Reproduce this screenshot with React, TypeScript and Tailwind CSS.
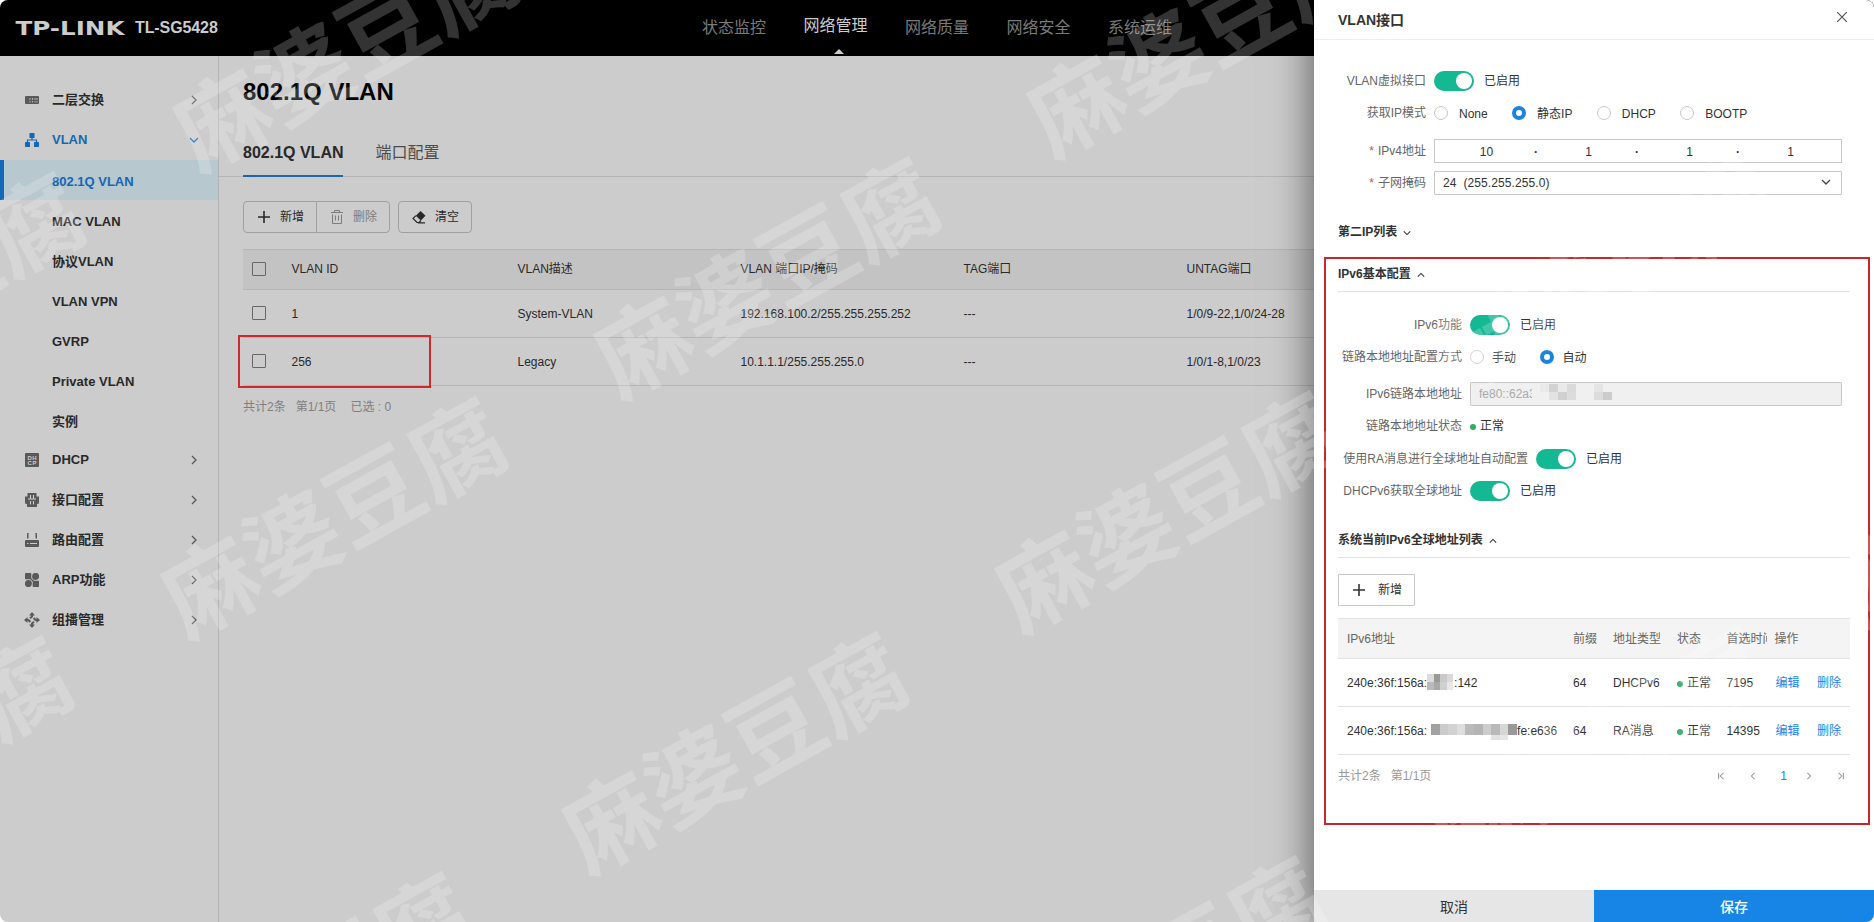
import type { ReactNode } from "react";
import clsx from "clsx";

// ── Data ──────────────────────────────────────────────────────────────────────

const TOP_NAV = ["状态监控", "网络管理", "网络质量", "网络安全", "系统运维"];
const ACTIVE_NAV = "网络管理";

const VLAN_CHILDREN = ["802.1Q VLAN", "MAC VLAN", "协议VLAN", "VLAN VPN", "GVRP", "Private VLAN", "实例"];

const COLUMNS = ["VLAN描述", "VLAN 端口IP/掩码", "TAG端口", "UNTAG端口"];

const VLANS = [
  { id: "1", cells: ["System-VLAN", "192.168.100.2/255.255.255.252", "---", "1/0/9-22,1/0/24-28"] },
  { id: "256", cells: ["Legacy", "10.1.1.1/255.255.255.0", "---", "1/0/1-8,1/0/23"] },
];

// Centre points of the repeated watermark
const WATERMARKS = [
  { x: 347, y: 54 },
  { x: 1201, y: 40 },
  { x: -87, y: 296 },
  { x: 768, y: 281 },
  { x: 1605, y: 275 },
  { x: 335, y: 521 },
  { x: 1169, y: 515 },
  { x: 2006, y: 510 },
  { x: -99, y: 760 },
  { x: 736, y: 756 },
  { x: 1599, y: 750 },
  { x: 301, y: 996 },
  { x: 1155, y: 980 },
];

// ── Icons ─────────────────────────────────────────────────────────────────────

function Chevron({ className, d, size = 10 }: { className?: string; d: string; size?: number }) {
  return (
    <svg width={size} height={size} viewBox="0 0 10 10" fill="none" stroke="currentColor" strokeWidth="1.3" className={className}>
      <path d={d} />
    </svg>
  );
}

const RIGHT = "M3 1l4 4-4 4";
const DOWN = "M1 3l4 4 4-4";
const UP = "M1 7l4-4 4 4";

function PlusIcon() {
  return (
    <svg width="12" height="12" viewBox="0 0 12 12" stroke="currentColor" strokeWidth="1.6">
      <path d="M6 0v12M0 6h12" />
    </svg>
  );
}

function TrashIcon() {
  return (
    <svg width="12" height="14" viewBox="0 0 12 14" fill="none" stroke="currentColor" strokeWidth="1">
      <path d="M0 2.5h12M3.500 2.5v-2h5v2M1.5 4.5v9h9v-9M4.5 5.5v5M7.5 5.5v5" />
    </svg>
  );
}

function EraserIcon() {
  return (
    <svg width="14" height="13" viewBox="0 0 14 13">
      <path d="M8.500 0l5 4.800L8.800 9.500 3.800 4.700z" fill="currentColor" />
      <path d="M3.800 4.700L1 7.500l4 4h2l2-2M6 11.900h7" fill="none" stroke="currentColor" strokeWidth="1.200" />
    </svg>
  );
}

function SwitchIcon() {
  return (
    <svg width="14" height="14" viewBox="0 0 14 14">
      <rect y="3" width="14" height="8" rx="1" fill="#595959" />
      <path d="M5 5v2M7.500 5v2M10 5v2M12 5v2M5 8v1.500M7.500 8v1.500M10 8v1.500M12 8v1.500" stroke="#b5b5b5" strokeWidth="1" />
    </svg>
  );
}

function VlanIcon() {
  return (
    <svg width="14" height="14" viewBox="0 0 14 14" fill="currentColor">
      <rect x="4.500" y="0" width="5" height="5" rx=".6" />
      <rect x="0" y="9" width="5" height="5" rx=".6" />
      <rect x="9" y="9" width="5" height="5" rx=".6" />
      <path d="M7 5v2M2.500 9V7h9v2" fill="none" stroke="currentColor" strokeWidth="1.200" />
    </svg>
  );
}

function DhcpIcon() {
  return (
    <svg width="14" height="14" viewBox="0 0 14 14">
      <rect width="14" height="14" rx="1" fill="#595959" />
      <g fill="#cccccc" fontFamily="Liberation Sans" fontWeight="700" fontSize="6">
        <text x="2.500" y="6.500" textLength="9">DH</text>
        <text x="2.500" y="12.300" textLength="9">CP</text>
      </g>
    </svg>
  );
}

function PortIcon() {
  return (
    <svg width="14" height="14" viewBox="0 0 14 14">
      <path d="M2.500 0h9v3.500H14v7l-2 .5v3H2v-3l-2-.5v-7h2.500z" fill="#595959" />
      <path d="M5.500 2v3.500M8.500 2v3.500M3 6h8M5.500 8v3.500M8.500 8v3.500" stroke="#cccccc" strokeWidth="1.100" />
    </svg>
  );
}

function RouterIcon() {
  return (
    <svg width="14" height="14" viewBox="0 0 14 14" fill="#595959">
      <rect x="2" width="1.500" height="5.500" />
      <rect x="10.500" width="1.500" height="5.500" />
      <rect y="7" width="14" height="7" rx="1" />
      <path d="M2 10.500h1.500M5 10.500h7" stroke="#cccccc" strokeWidth="1" />
    </svg>
  );
}

function ArpIcon() {
  return (
    <svg width="14" height="14" viewBox="0 0 14 14" fill="#595959">
      <rect width="6.300" height="6.300" rx=".8" />
      <circle cx="10.600" cy="3.400" r="3.500" />
      <circle cx="3.400" cy="10.600" r="3.500" />
      <rect x="7.700" y="7.700" width="6.300" height="6.300" rx=".8" />
      <path d="M5 5l4 4" stroke="#595959" strokeWidth="1.200" />
    </svg>
  );
}

function MulticastIcon() {
  return (
    <svg width="16" height="16" viewBox="0 0 16 16" className="-mx-px" fill="#595959">
      <path d="M8 0l3 3.500H5zM8 16l-3-3.500h6zM0 8l3.500-3v6zM16 8l-3.500 3V5z" />
      <path d="M8 3v1.500L6 6.300M8 13v-1.500l2-1.800M3 8h1.500l1.800 2M13 8h-1.500L9.700 6" fill="none" stroke="#595959" strokeWidth="2" />
    </svg>
  );
}

const SIDE_MENU: { label: string; icon: ReactNode; open?: boolean }[] = [
  { label: "二层交换", icon: <SwitchIcon /> },
  { label: "VLAN", icon: <VlanIcon />, open: true },
  { label: "DHCP", icon: <DhcpIcon /> },
  { label: "接口配置", icon: <PortIcon /> },
  { label: "路由配置", icon: <RouterIcon /> },
  { label: "ARP功能", icon: <ArpIcon /> },
  { label: "组播管理", icon: <MulticastIcon /> },
];

// ── Header / sidebar ──────────────────────────────────────────────────────────

function Header() {
  return (
    <header className="flex h-14 shrink-0 items-center bg-black">
      <svg width="112" height="17" viewBox="0 0 112 17" className="ml-[15px]">
        <text
          x="0.500"
          y="15"
          fill="#cccccc"
          fontFamily="DejaVu Sans"
          fontWeight="700"
          fontSize="19"
          textLength="109"
          lengthAdjust="spacingAndGlyphs"
        >
          TP-LINK
        </text>
      </svg>
      <span className="ml-2 w-[567px] text-base font-bold tracking-[-0.1px] text-[#cccccc]">TL-SG5428</span>
      <nav className="flex h-full gap-[37.5px]">
        {TOP_NAV.map((item) => (
          <div
            key={item}
            className={clsx(
              "flex h-full flex-col items-center text-base leading-[55px] whitespace-nowrap",
              item === ACTIVE_NAV ? "text-[#cccccc]" : "text-[#7a7a7a]"
            )}
          >
            <span className={clsx("h-[49px]", item === ACTIVE_NAV && "leading-[51px]")}>{item}</span>
            {item === ACTIVE_NAV && (
              <svg width="10" height="5" viewBox="0 0 10 5" className="ml-1.5" fill="#cccccc">
                <path d="M5 0l5 5H0z" />
              </svg>
            )}
          </div>
        ))}
      </nav>
    </header>
  );
}

function Sidebar() {
  return (
    <aside className="w-[219px] shrink-0 border-r border-[#b3b3b3] pt-6 text-[13px] font-bold text-[#292929]">
      {SIDE_MENU.map((item) => (
        <div key={item.label}>
          <div className={clsx("flex h-10 items-center pl-[25px] pr-[19px]", item.open && "text-[#1667b3]")}>
            {item.icon}
            <span className="ml-[13px] flex-1 pb-px">{item.label}</span>
            <Chevron d={item.open ? DOWN : RIGHT} className={item.open ? "" : "text-[#595959]"} />
          </div>
          {item.open &&
            VLAN_CHILDREN.map((child, i) => (
              <div
                key={child}
                className={clsx(
                  "flex h-10 items-center pt-[3px]",
                  i === 0 ? "border-l-4 border-[#126ab8] bg-[#b7c8cf] pl-12 text-[#1667b3]" : "pl-[52px]"
                )}
              >
                {child}
              </div>
            ))}
        </div>
      ))}
    </aside>
  );
}

// ── Main content ──────────────────────────────────────────────────────────────

function Checkbox() {
  return <span className="block size-3.5 rounded-[1px] border border-[#666666]" />;
}

const GRID = "grid grid-cols-[48.500px_226px_223px_223px_223px_1fr] items-center border-b border-[#b5b5b5]";

function MainContent() {
  return (
    <main className="min-w-0 flex-1 overflow-hidden text-xs text-[#292929]">
      <h1 className="ml-6 mt-5 h-8 text-2xl leading-8 font-bold text-black">802.1Q VLAN</h1>
      <div className="mt-[22px] flex h-[47px] gap-8 border-b border-[#b5b5b5] pl-6 text-base leading-[46px]">
        <span className="h-[47px] border-b-2 border-[#1b66ae] font-bold">802.1Q VLAN</span>
        <span className="text-[#4d4d4d]">端口配置</span>
      </div>

      <div className="mt-6 ml-6 flex h-8 gap-2">
        <div className="flex w-[147px] rounded-sm border border-[#a0a0a0]">
          <div className="flex w-[73px] items-center gap-2.5 border-r border-[#a0a0a0] pl-3.5">
            <PlusIcon />
            新增
          </div>
          <div className="flex items-center gap-2.5 pl-3.5 text-[#7d7d7d]">
            <TrashIcon />
            删除
          </div>
        </div>
        <div className="flex w-[74px] items-center gap-[9px] rounded-sm border border-[#a0a0a0] pl-[13px]">
          <EraserIcon />
          清空
        </div>
      </div>

      <div className="mt-4 ml-6">
        <div className={clsx(GRID, "h-[41px] border-t bg-[#c3c3c3] pb-0.5")}>
          <span className="pl-[9px]"><Checkbox /></span>
          <span>VLAN ID</span>
          {COLUMNS.map((c) => (
            <span key={c}>{c}</span>
          ))}
        </div>
        {VLANS.map((row) => (
          <div key={row.id} className={clsx(GRID, "h-12")}>
            <span className="pb-px pl-[9px]"><Checkbox /></span>
            <span>{row.id}</span>
            {row.cells.map((c, i) => (
              <span key={i}>{c}</span>
            ))}
          </div>
        ))}
        <div className="mt-[11px] flex leading-5 text-[#7f7f7f]">
          <span className="mr-2.5">共计2条</span>
          <span className="mr-3.5">第1/1页</span>
          <span>已选 : 0</span>
        </div>
      </div>
    </main>
  );
}

// ── Drawer ────────────────────────────────────────────────────────────────────

function Toggle() {
  return (
    <>
      <span className="flex h-5 w-10 items-center justify-end rounded-full bg-[#14b892] pr-0.5">
        <span className="size-4 rounded-full bg-white" />
      </span>
      <span className="ml-2.5">已启用</span>
    </>
  );
}

function Radio({ label, checked, gap = "ml-[11px]" }: { label: string; checked?: boolean; gap?: string }) {
  return (
    <span className="mr-[24.4px] flex items-center">
      <span
        className={clsx(
          "size-3.5 shrink-0 rounded-full bg-white",
          checked ? "border-4 border-[#1c83e0]" : "border border-[#c8c8c8]"
        )}
      />
      <span className={clsx(gap, "pt-px")}>{label}</span>
    </span>
  );
}

interface RowProps {
  label: string;
  required?: boolean;
  width?: string;
  children: ReactNode;
}

function Row({ label, required, width = "w-[88px]", children }: RowProps) {
  return (
    <div className="flex h-8 items-center">
      <span className={clsx("mr-2 pb-px text-right whitespace-nowrap text-[#666666]", width)}>
        {required && <span className="mr-1 text-[#e04848]">*</span>}
        {label}
      </span>
      {children}
    </div>
  );
}

function SectionTitle({ title, d, line }: { title: string; d: string; line?: boolean }) {
  return (
    <div className={clsx("flex h-[34px] items-center gap-1.5 pb-0.5 text-xs font-bold text-[#333333]", line && "border-b border-[#e2e2e2]")}>
      {title}
      <Chevron d={d} size={8} className="mt-0.5 text-[#333333]" />
    </div>
  );
}

/* Pixelated patch: one row of shades per line, each cell is `cell` px wide */
function Mosaic({ rows, cell, height, className }: { rows: string[][]; cell: number; height: number; className?: string }) {
  return (
    <svg width={rows[0].length * cell} height={rows.length * height} className={className} shapeRendering="crispEdges">
      {rows.map((row, y) =>
        row.map((fill, x) => <rect key={`${x}-${y}`} x={x * cell} y={y * height} width={cell} height={height} fill={fill} />)
      )}
    </svg>
  );
}

const V6_GRID = "grid grid-cols-[226px_40px_64px_49.500px_48px_41.500px_1fr] items-center border-b border-[#e2e2e2] pl-[9px]";

function V6Row({ address, type, time }: { address: ReactNode; type: string; time: string }) {
  return (
    <div className={clsx(V6_GRID, "h-12 whitespace-nowrap")}>
      <span className="flex items-center">{address}</span>
      <span>64</span>
      <span>{type}</span>
      <span className="flex items-center gap-1">
        <i className="mt-0.5 size-1.5 rounded-full bg-[#3cb46e]" />
        正常
      </span>
      <span>{time}</span>
      <span className="pl-px text-[#1785e6]">编辑</span>
      <span className="pl-px text-[#1785e6]">删除</span>
    </div>
  );
}

function Drawer() {
  return (
    <section className="absolute inset-y-0 right-0 flex w-[560px] flex-col bg-white text-xs text-[#333333] shadow-[0_0_40px_rgba(0,0,0,0.600)]">
      <div className="flex h-10 shrink-0 items-center justify-between border-b border-[#eeeeee] pr-[27px] pl-6">
        <span className="text-sm font-bold">VLAN接口</span>
        <svg width="10" height="10" viewBox="0 0 10 10" className="mb-[5px]" stroke="#555555" strokeWidth="1.200">
          <path d="M0 0l10 10M10 0L0 10" />
        </svg>
      </div>

      <div className="flex-1 px-6 pt-[25px]">
        <Row label="VLAN虚拟接口"><Toggle /></Row>
        <Row label="获取IP模式">
          <Radio label="None" />
          <Radio label="静态IP" checked />
          <Radio label="DHCP" />
          <Radio label="BOOTP" />
        </Row>
        <div className="mt-1.5">
          <Row label="IPv4地址" required>
            <div className="flex h-6 w-[408px] items-center border border-[#c8c8c8] pt-0.5">
              <span className="w-[103px] text-center">10</span>
              {[1, 2, 3].map((n) => (
                <span key={n} className="flex w-[101px]">
                  <span className="-ml-1 w-1 font-bold">·</span>
                  <span className="w-[101px] text-center">1</span>
                </span>
              ))}
            </div>
          </Row>
          <Row label="子网掩码" required>
            <div className="flex h-6 w-[408px] items-center justify-between rounded-[1px] border border-[#c8c8c8] pr-2.5 pl-2">
              <span className="tracking-[0.1px] whitespace-pre">24  (255.255.255.0)</span>
              <Chevron d={DOWN} className="mb-0.5 text-[#444444]" />
            </div>
          </Row>
        </div>

        <div className="mt-[17px]">
          <SectionTitle title="第二IP列表" d={DOWN} />
        </div>
        <div className="mt-2 mb-[17px]">
          <SectionTitle title="IPv6基本配置" d={UP} line />
        </div>

        <Row label="IPv6功能" width="w-[124px]"><Toggle /></Row>
        <Row label="链路本地地址配置方式" width="w-[124px]">
          <Radio label="手动" gap="ml-2" />
          <Radio label="自动" gap="ml-2" checked />
        </Row>
        <div className="mt-[5px]">
          <Row label="IPv6链路本地地址" width="w-[124px]">
            <div className="flex h-6 w-[372px] items-center rounded-[1px] border border-[#c8c8c8] bg-[#f0f0f0] pl-[7px] text-[#aaaaaa]">
              <span className="w-[54px] overflow-hidden pl-px">fe80::62a3</span>
              <Mosaic
                className="-mt-1 ml-2"
                cell={9}
                height={8}
                rows={[
                  ["#eaeaea", "#d2d2d2", "#e9e9e9", "#dadada", "#f0f0f0", "#f0f0f0", "#e4e4e4", "#f0f0f0"],
                  ["#f0f0f0", "#e2e2e2", "#d0d0d0", "#dcdcdc", "#f0f0f0", "#f0f0f0", "#dcdcdc", "#cccccc"],
                ]}
              />
            </div>
          </Row>
          <Row label="链路本地地址状态" width="w-[124px]">
            <i className="mt-0.5 mr-1 size-1.5 rounded-full bg-[#2fae60]" />
            <span>正常</span>
          </Row>
        </div>
        <div className="mt-px">
          <Row label="使用RA消息进行全球地址自动配置" width="w-[190px]"><Toggle /></Row>
          <Row label="DHCPv6获取全球地址" width="w-[124px]"><Toggle /></Row>
        </div>

        <div className="mt-[17px]">
          <SectionTitle title="系统当前IPv6全球地址列表" d={UP} line />
        </div>
        <div className="mt-4 flex h-8 w-[77px] items-center gap-[13px] rounded-[1px] border border-[#c8c8c8] pl-3.5">
          <PlusIcon />
          新增
        </div>

        <div className="mt-3">
          <div className={clsx(V6_GRID, "h-[41px] border-t bg-[#f4f4f4] whitespace-nowrap text-[#666666]")}>
            <span>IPv6地址</span>
            <span>前缀</span>
            <span>地址类型</span>
            <span>状态</span>
            <span className="w-10 overflow-hidden">首选时间</span>
            <span>操作</span>
          </div>
          <V6Row
            address={
              <>
                240e:36f:156a:
                <Mosaic
                  className="-mt-0.5"
                  cell={6.5}
                  height={8}
                  rows={[
                    ["#dcdcdc", "#999999", "#c9c9c9", "#dadada"],
                    ["#bababa", "#a8a8a8", "#cfcfcf", "#e8e8e8"],
                  ]}
                />
                <span className="ml-px">:142</span>
              </>
            }
            type="DHCPv6"
            time="7195"
          />
          <V6Row
            address={
              <>
                240e:36f:156a:
                <Mosaic
                  className="mt-[3px] ml-1"
                  cell={8.6}
                  height={5.5}
                  rows={[
                    ["#a2a2a2", "#cbcbcb", "#d2d2d2", "#dedede", "#bababa", "#b4b4b4", "#cccccc", "#b9b9b9", "#d6d6d6", "#999999"],
                    ["#a2a2a2", "#cbcbcb", "#d2d2d2", "#dedede", "#bababa", "#b4b4b4", "#cccccc", "#b9b9b9", "#d6d6d6", "#999999"],
                    ["#ffffff", "#ffffff", "#ffffff", "#ffffff", "#ffffff", "#ffffff", "#ffffff", "#e2e2e2", "#e6e6e6", "#ffffff"],
                  ]}
                />
                fe:e636
              </>
            }
            type="RA消息"
            time="14395"
          />
          <div className="flex h-[42px] items-center pr-[5px] text-[#999999]">
            <span className="mr-2.5">共计2条</span>
            <span className="flex-1">第1/1页</span>
            <div className="flex items-center">
              <Chevron d="M2 1v8M8 1L4 5l4 4" size={8} className="mr-6" />
              <Chevron d="M7 1L3 5l4 4" size={8} className="mr-[23px]" />
              <span className="mr-[18px] text-[#1785e6]">1</span>
              <Chevron d={RIGHT} size={8} className="mr-6" />
              <Chevron d="M8 1v8M2 1l4 4-4 4" size={8} />
            </div>
          </div>
        </div>
      </div>

      <div className="flex h-8 shrink-0 text-sm">
        <button type="button" className="flex-1 bg-[#e6e6e6] pt-0.5">取消</button>
        <button type="button" className="flex-1 bg-[#1785e6] pt-0.5 font-medium text-white">保存</button>
      </div>
    </section>
  );
}

// ── App ───────────────────────────────────────────────────────────────────────

export default function App() {
  return (
    <div className="relative h-[922px] w-[1874px] overflow-hidden rounded-lg bg-[#cccccc] font-['Liberation_Sans','Noto_Sans_CJK_SC',sans-serif]">
      <div className="flex h-full flex-col">
        <Header />
        <div className="flex flex-1">
          <Sidebar />
          <MainContent />
        </div>
      </div>

      <Drawer />

      {/* Highlight frames */}
      <div className="absolute top-[335px] left-[238px] h-[53px] w-[193px] border-2 border-[#d0282d]" />
      <div className="absolute top-[257px] left-[1324px] h-[568px] w-[546px] border-2 border-[#c9252d]" />

      {/* Watermark layer */}
      <div className="pointer-events-none absolute inset-0 overflow-hidden" aria-hidden="true">
        {WATERMARKS.map((w) => (
          <span
            key={`${w.x}:${w.y}`}
            className="absolute -translate-x-1/2 -translate-y-1/2 -rotate-[29deg] text-[94px] leading-none font-bold whitespace-nowrap text-white opacity-20"
            style={{ left: w.x, top: w.y }}
          >
            麻婆豆腐
          </span>
        ))}
      </div>
    </div>
  );
}
